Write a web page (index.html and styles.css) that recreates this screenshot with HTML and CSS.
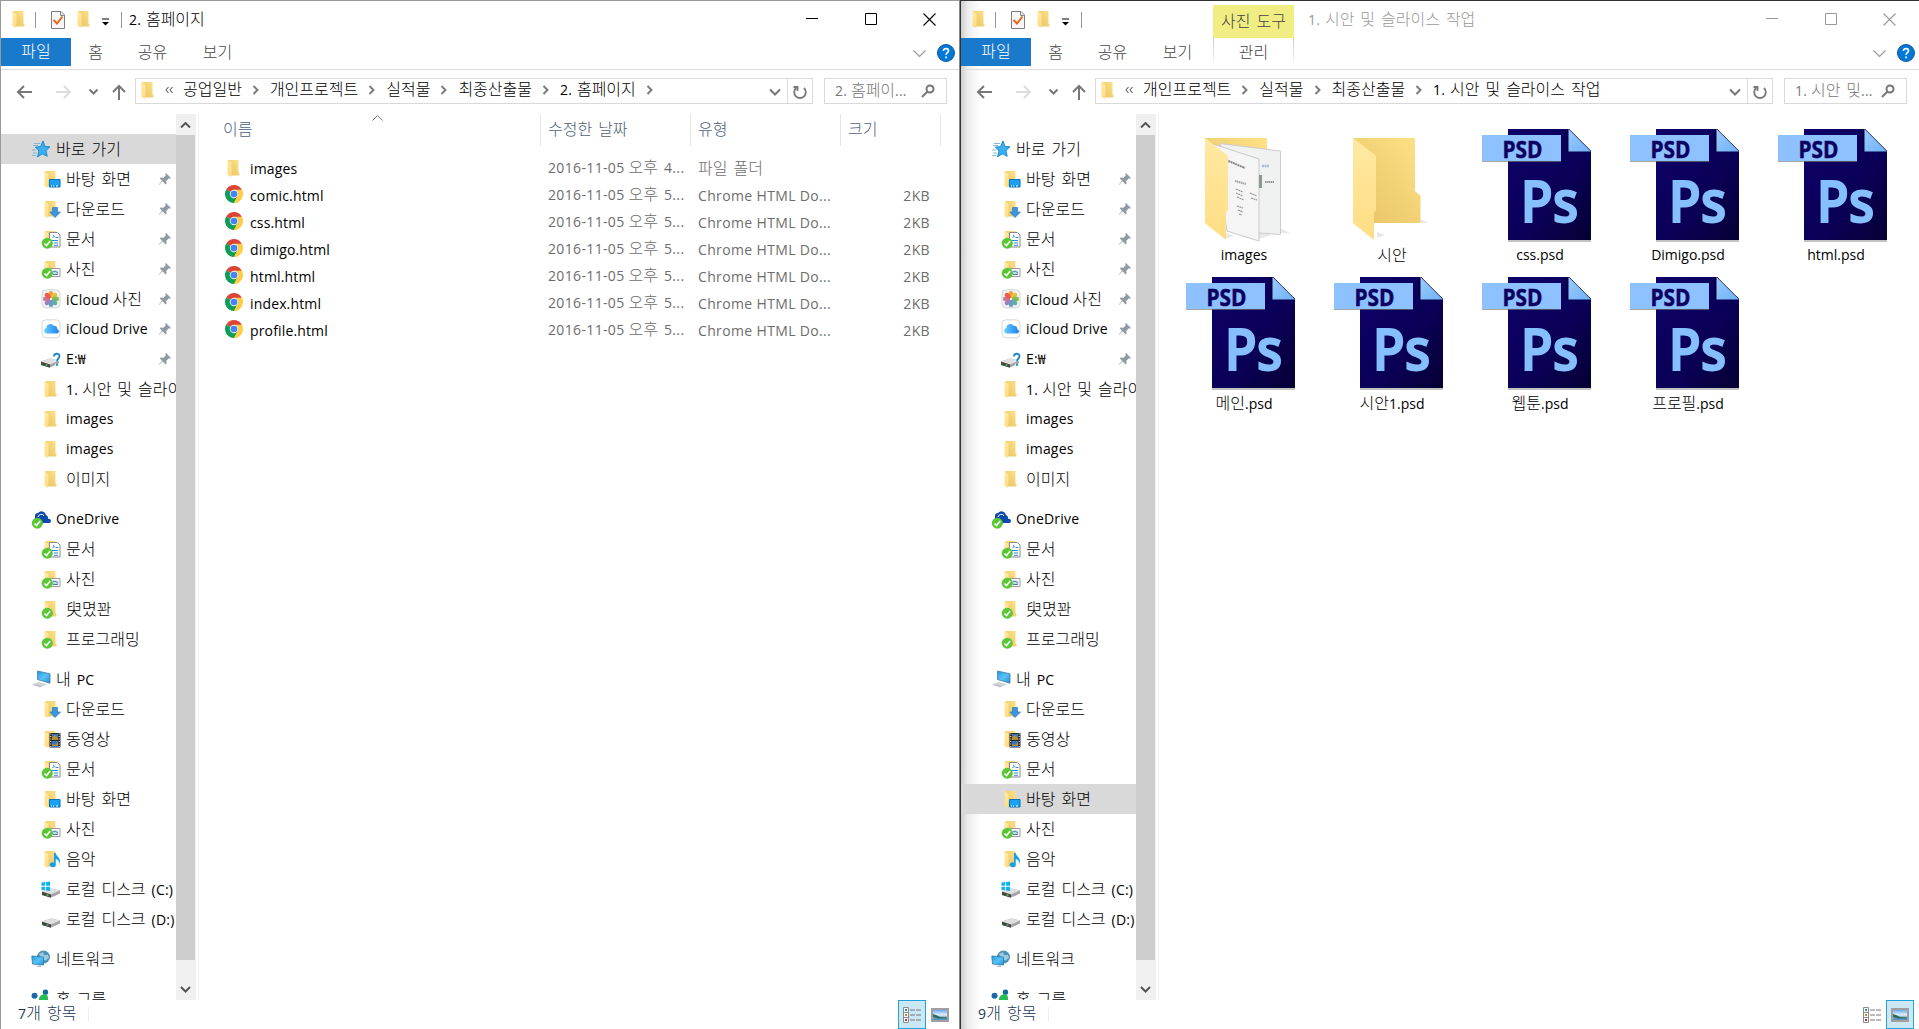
FILE: index.html
```html
<!DOCTYPE html>
<html lang="ko">
<head>
<meta charset="utf-8">
<title>파일 탐색기</title>
<link rel="stylesheet" href="styles.css">
</head>
<body>
<svg class="defs" width="0" height="0">
  <defs>
    <linearGradient id="gBack" x1="0" y1="1" x2="1" y2="0"><stop offset="0" stop-color="#e6c265"/><stop offset="1" stop-color="#ffe186"/></linearGradient>
    <linearGradient id="gFlap" x1="0" y1="0" x2="0" y2="1"><stop offset="0" stop-color="#ffe9a2"/><stop offset="1" stop-color="#ffdd83"/></linearGradient>
    <linearGradient id="gScreen" x1="0" y1="0" x2="1" y2="1"><stop offset="0" stop-color="#1d9be0"/><stop offset=".5" stop-color="#5ac1f5"/><stop offset="1" stop-color="#2196dd"/></linearGradient>
    <linearGradient id="gCloud" x1="0" y1="0" x2="1" y2="0"><stop offset="0" stop-color="#62d0fb"/><stop offset="1" stop-color="#2180ee"/></linearGradient>
    <linearGradient id="gPage" x1="0" y1="0" x2="1" y2="1"><stop offset="0" stop-color="#0d006a"/><stop offset=".6" stop-color="#0a0056"/><stop offset="1" stop-color="#060033"/></linearGradient>
    <linearGradient id="gPs" x1="0" y1="0" x2="1" y2="1"><stop offset="0" stop-color="#9bcbff"/><stop offset="1" stop-color="#6fb2f5"/></linearGradient>
    <linearGradient id="gSky" x1="0" y1="0" x2="0" y2="1"><stop offset="0" stop-color="#6fa8ee"/><stop offset=".5" stop-color="#e3f3fe"/><stop offset=".7" stop-color="#7fb0c8"/><stop offset="1" stop-color="#4b8fd0"/></linearGradient>
  </defs>
  <symbol id="folder" viewBox="0 0 20 20"><path d="M4 2h10.500v12.500l1 .5v2.500H6z" fill="url(#gBack)"/><path d="M3.500 2l4 3v10l-.6 3.700-3.400-1.700z" fill="url(#gFlap)"/></symbol>
  <symbol id="check" viewBox="0 0 20 20"><circle cx="6.300" cy="14.200" r="5.500" fill="#57c832"/><path d="M3.500 14.500l2 2 3.700-4.600" fill="none" stroke="#fff" stroke-width="1.600"/></symbol>
  <symbol id="star" viewBox="0 0 20 20"><path d="M12 2l2 5.500 5 .3-4 3.700 1.200 5.800-4.700-2.500-5 3 1.500-5.800-3.500-4 5-.3z" fill="#38b0f2" stroke="#1580c4" stroke-width=".9"/><path d="M3 4.500h6M2 6.500h5M1 11h4M2 14h4M1 16.500h4" stroke="#70b6df" stroke-width=".9"/></symbol>
  <symbol id="desktop" viewBox="0 0 20 20"><use href="#folder"/><path d="M8.500 10.500h10.500v7.500H8.500z" fill="#18a1f6" stroke="#0b72ad"/><path d="M10 17h1m1 0h1m2 0h2" stroke="#fff"/></symbol>
  <symbol id="download" viewBox="0 0 20 20"><use href="#folder"/><path d="M11.500 8.500h5V13h3L14 18.500 8.800 13h2.700z" fill="#3996e0" stroke="#2c77b8" stroke-width=".7"/></symbol>
  <symbol id="docs" viewBox="0 0 20 20"><use href="#folder"/><path d="M8.500 3.500h8l2.500 2.500v12h-10.500z" fill="#fff" stroke="#888"/><path d="M12 6l1.500 1-2 2M14.500 8.500h3M11 11.500h6M13 14h4M13 16.300h4" stroke="#2a8dd4" fill="none"/><use href="#check"/></symbol>
  <symbol id="pics" viewBox="0 0 20 20"><use href="#folder"/><path d="M8.500 9.500h10.500v8H8.500z" fill="#fff" stroke="#999"/><path d="M10 11.500h7.500v4.500H10z" fill="#bfdcf4"/><path d="M12 13l2-1 3 2M12 15.500h5" stroke="#4b7eaf" fill="none"/><use href="#check"/></symbol>
  <symbol id="synced" viewBox="0 0 20 20"><use href="#folder"/><use href="#check"/></symbol>
  <symbol id="iphoto" viewBox="0 0 20 20"><rect x="1" y=".8" width="18" height="18" rx="4" fill="#f4f4f4" stroke="#ccc" stroke-width=".8"/><g opacity=".88"><ellipse cx="10" cy="5.500" rx="2.400" ry="3.500" fill="#f7941d"/><ellipse cx="10" cy="5.500" rx="2.400" ry="3.500" fill="#dfbd28" transform="rotate(45 10 10)"/><ellipse cx="10" cy="5.500" rx="2.400" ry="3.500" fill="#79b637" transform="rotate(90 10 10)"/><ellipse cx="10" cy="5.500" rx="2.400" ry="3.500" fill="#4daa91" transform="rotate(135 10 10)"/><ellipse cx="10" cy="5.500" rx="2.400" ry="3.500" fill="#5593c9" transform="rotate(180 10 10)"/><ellipse cx="10" cy="5.500" rx="2.400" ry="3.500" fill="#8b73b6" transform="rotate(225 10 10)"/><ellipse cx="10" cy="5.500" rx="2.400" ry="3.500" fill="#c3668e" transform="rotate(270 10 10)"/><ellipse cx="10" cy="5.500" rx="2.400" ry="3.500" fill="#ee4934" transform="rotate(315 10 10)"/></g></symbol>
  <symbol id="icloud" viewBox="0 0 20 20"><rect x="1" y=".8" width="18" height="18" rx="4" fill="#fff" stroke="#ccc" stroke-width=".8"/><path d="M5.500 14.500a2.800 2.800 0 0 1-.2-5.500 4 4 0 0 1 7.300-2.200 3.500 3.500 0 0 1 3.700 3.400 2.200 2.200 0 0 1 0 4.300z" fill="url(#gCloud)"/></symbol>
  <symbol id="drive" viewBox="0 0 20 20"><path d="M1 12.500l9-3 9 2v3l-9 4-9-2.500z" fill="#a3a3a3"/><path d="M1 12.500l9-3 9 2-9 4z" fill="#dfdfdf"/><path d="M1 12.800l9 2.700v3.200l-9-2.700z" fill="#454545"/><path d="M5.500 16h2" stroke="#51dd45" stroke-width="1.300"/></symbol>
  <symbol id="unknown" viewBox="0 0 20 20"><use href="#drive" x="-1"/><path d="M13 7c0-4 6-4 6-.5 0 3-3 2.500-3 6M16 14.500v2" stroke="#fff" stroke-width="3.500" fill="none"/><path d="M13 7.500c0-3.500 5.500-3.500 5.500-.5 0 3-2.500 2.500-2.500 5.500M16 14.500v2.200" stroke="#2384ce" stroke-width="1.900" fill="none"/></symbol>
  <symbol id="windisk" viewBox="0 0 20 20"><use href="#drive"/><path d="M.5 3.500l3.500-.4v3.600H.5zM5 3l4-.6v4.300H5zM.5 7.700H4v3.500L.5 11zM5 7.700h4V12l-4-.6z" fill="#08b5f0"/></symbol>
  <symbol id="onedrive" viewBox="0 0 20 20"><path d="M4 12V6a3 3 0 0 1 3-2 4.500 4.500 0 0 1 8 2 3.500 3.500 0 0 1 2 4 2 2 0 0 1 1.500 4H8z" fill="#1049ac"/><path d="M7 8a3.500 3.500 0 0 1 6-1.500" stroke="#fff" fill="none"/><use href="#check"/></symbol>
  <symbol id="pc" viewBox="0 0 20 20"><path d="M6.500 2l12.500 2.800v9.400L6.500 10.500z" fill="url(#gScreen)" stroke="#326f98" stroke-width=".7"/><path d="M.5 15.500L8 13l8 2.500-7 3z" fill="#cdd3d8"/><path d="M3 15.500l7 2" stroke="#a9b2ba" stroke-width=".6"/></symbol>
  <symbol id="video" viewBox="0 0 20 20"><use href="#folder"/><path d="M8.500 4h11v14.500h-11z" fill="#292929"/><path d="M11 5h6v6h-6zM11 12h6v6h-6z" fill="#3477c8"/><path d="M11 8l3-2 3 3v2h-6zM11 15l3 1 3-3v4h-6z" fill="#b58e33"/><path d="M9.800 4.500v14M18.200 4.500v14" stroke="#fff" stroke-dasharray="1 1.500"/></symbol>
  <symbol id="music" viewBox="0 0 20 20"><use href="#folder"/><path d="M13 4h1.700c.2 3 4.200 4 4.300 8 0 2-1 3-1 3 .6-3-1.200-4.500-3.300-5v6a3 2.400 0 1 1-1.700-2.300z" fill="#11a0ec"/></symbol>
  <symbol id="network" viewBox="0 0 20 20"><circle cx="12.500" cy="8" r="6.500" fill="#4c91b7"/><path d="M8 5l4-2 1 3 4-.3 1 3-4 3-4-3z" fill="#9bcbe0"/><path d="M.8 7l11.700 1v8L1.500 15z" fill="url(#gScreen)" stroke="#267eae" stroke-width=".8"/><path d="M4 17.500l6-1.500v2z" fill="#a7b6c2"/></symbol>
  <symbol id="homegroup" viewBox="0 0 20 20"><circle cx="3.500" cy="6.800" r="3" fill="#1769aa"/><circle cx="14.500" cy="3.300" r="2.700" fill="#1466a4"/><path d="M8 20V9q2-4 6-4 3 1 3 4v11z" fill="#28bd51"/></symbol>
  <symbol id="chrome" viewBox="0 0 20 20"><path d="M10 10L1.340 5a10 10 0 0 1 17.320 0z" fill="#db4437"/><path d="M10 10L18.660 5A10 10 0 0 1 10 20z" fill="#ffcd40"/><path d="M10 10v10A10 10 0 0 1 1.340 5z" fill="#0f9d58"/><path d="M10 5.400h8.900L14 12.300z" fill="#ffcd40"/><path d="M6 12.300l4 2.300 4-2.300L10 20z" fill="#0f9d58"/><path d="M14 12.300L10 20l5-1 3-5V8z" fill="#ffcd40"/><circle cx="10" cy="10" r="4.700" fill="#eee"/><circle cx="10" cy="10" r="3.700" fill="#4285f4"/></symbol>
  <symbol id="pin" viewBox="0 0 14 14"><path d="M8 1l5 5-1 .8-1.200-.5-2.500 2.600.3 2.700-1 .8L4.500 9.200 1 13 .7 12.700 4 8.800 1.700 6.300l1-.9 2.700.3 2.400-2.500L7.200 2z" fill="#8f9aa3"/></symbol>
  <symbol id="qcheck" viewBox="0 0 16 20"><path d="M1.500 1.500h9.500l3.500 3.500v13.500h-13z" fill="#f7f7f7" stroke="#7e7e7e"/><path d="M10.500 1.500v4h4" fill="#ddd" stroke="#8a8a8a"/><path d="M3.500 10l3.500 3.500 5.500-7" fill="none" stroke="#f2601c" stroke-width="2"/></symbol>
  <symbol id="photo" viewBox="0 0 18 14"><path d="M1 1h16v12H1z" fill="#fff" stroke="#a0a0a0" stroke-width="2"/><path d="M2 2h14v10H2z" fill="url(#gSky)"/><path d="M2 6q4 1 7 3l7 .5v1H7L2 9z" fill="#2f6a5e"/></symbol>
  <symbol id="list" viewBox="0 0 18 16"><path d="M.5.500h5v15h-5zM.5 5.500h5M.5 10.500h5" fill="#fff" stroke="#8c8c8c"/><path d="M7 3h5m1 0h5M7 8h5m1 0h5M7 13h5m1 0h5" stroke="#777"/><path d="M2 2h2v2H2z" fill="#2997a8"/><path d="M2 7h2v2H2z" fill="#b48c31"/><path d="M2 12h2v2H2z" fill="#cb2d24"/></symbol>
  <symbol id="right" viewBox="0 0 8 10"><path d="M1.500 1l4 4-4 4" fill="none" stroke="#7c7c7c" stroke-width="2"/></symbol>
  <symbol id="psd" viewBox="0 0 110 114"><path d="M26 2h61l22 22v89H26z" fill="#999" opacity=".6"/><path d="M26 0h61l22 22v89H26z" fill="url(#gPage)"/><path d="M84 0h3l22 22v1H84z" fill="#070042"/><path d="M86.500 0L109 22.500H86.500z" fill="url(#gPs)"/><path d="M0 7h79v26H0z" fill="#777" opacity=".65"/><path d="M0 6h79v26H0z" fill="#8dc1ff"/><text class="psd-tag" x="20.500" y="28.500" textLength="40" lengthAdjust="spacingAndGlyphs">PSD</text><text class="psd-logo" x="38.500" y="92.500" textLength="58" lengthAdjust="spacingAndGlyphs">Ps</text></symbol>
  <symbol id="bigfolder" viewBox="0 0 88 106"><path d="M24 100l8-3-8-3zM67 85h9l-9-4z" fill="#ccc" opacity=".45"/><path d="M0 0h61q1 0 1 1v52l5.500 5v26q0 1-1 1H15z" fill="url(#gBack)"/><path d="M0 0l22 17q1 1 1 2v53l-2 3v27L1 86q-1-1-1-2z" fill="url(#gFlap)"/></symbol>
  <symbol id="picfolder" viewBox="0 0 88 106"><path d="M54 101l12-4-12-5zM75 95h10l-10-5zM20 101l9-3-8-3z" fill="#ccc" opacity=".45"/><path d="M0 0h61q1 0 1 1v84H0z" fill="url(#gBack)"/><path d="M15 5.500L75.500 13v83.500l-21-1.500z" fill="#f0f1f1" stroke="#ccc"/><path d="M8 6l46 15v82L22 93z" fill="#f5f5f5" stroke="#cacaca"/><g opacity=".75"><path d="M21 22l19 8" stroke="#666" stroke-width="2" stroke-dasharray="2 .5"/><path d="M30 43l11 3" stroke="#8a8a8a" stroke-width="2" stroke-dasharray="1.500 .5"/><path d="M31 51l7 3M31 55l7 3M32 59l7 3M45 55l7 3M46 60l6 2M32 68l6 2M33 72l5 2M34 76l3 1" stroke="#777" stroke-width="1.200" stroke-dasharray="2 .5"/><path d="M57 28h7" stroke="#91a9e0" stroke-width="2.500" stroke-dasharray="2 .5"/><path d="M60 44h9" stroke="#777" stroke-width="2" stroke-dasharray="1.500 .5"/></g><path d="M55.500 37v13" stroke="#8b998b" stroke-width="3"/><path d="M0 0l22 17q1 1 1 2v53l-2 3v27L1 86q-1-1-1-2z" fill="url(#gFlap)"/></symbol>
</svg>
<main class="screen" id="screen"></main>
<script src="app.js"></script>
</body>
</html>
```

FILE: styles.css
```css
* { box-sizing: border-box; }
body { margin: 0; background: #fff; overflow: hidden; }
body, .psd-tag, .psd-logo { font-family: "Open Sans", "Noto Sans CJK KR", sans-serif; }
.defs { position: absolute; }
svg { display: block; flex: none; }
.screen { display: grid; grid-template-columns: 960px 959px; height: 1029px; font-size: 14px; color: #000; white-space: nowrap; line-height: 20px; letter-spacing: .2px; }
.ko { font-family: "Noto Sans CJK KR", sans-serif; font-size: 16px; font-weight: 300; line-height: 18px; letter-spacing: 0; word-spacing: 1.500px; }

.window { display: flex; flex-direction: column; overflow: hidden; height: 1029px; border-top: 1px solid #999; border-left: 1px solid #999; border-right: 1px solid #888; background: #fff; }
.window.inactive { border-color: #333; border-right: 0; background: linear-gradient(90deg, #cfcfcf, #eee 7px, #fff 20px); }

.titlebar { display: flex; height: 37px; align-items: flex-start; }
.quick { display: flex; width: 128px; height: 37px; align-items: flex-start; padding: 8px 0 0 8px; }
.quick .bar { width: 1px; height: 16px; margin-top: 3px; background: #999; }
.quick .q1 { margin-right: 6px; }
.quick .qc { margin: 1px 8px 0 14px; }
.quick .tri { margin: 9px 12px 0 8px; }
.title { flex: 1; padding-top: 8px; word-spacing: 1px; }
.inactive .title { color: #999; }
.tool-tag { width: 81px; height: 33px; margin: 4px 14px 0 124px; padding-top: 6px; text-align: center; background: #f0ee83; color: #444; }
.caption { display: flex; gap: 46px; padding: 12px 23px 0 0; color: #000; }
.inactive .caption { color: #999; }

.tabs { display: flex; height: 32px; border-bottom: 1px solid #dadbdc; color: #444; }
.tab { padding: 4px 0 0; text-align: center; height: 28px; width: 65px; }
.tab.file { background: #1979ca; color: #fff; width: 70px; padding-top: 3px; }
.tab.home { width: 49px; }
.tab.manage { width: 81px; height: 24px; margin-left: 3px; border: 1px solid; border-width: 0 1px; border-image: linear-gradient(#ccc, #eee) 1; }
.ribbon-tools { display: flex; margin-left: auto; padding: 6px 4px 0 0; gap: 11px; }
.ribbon-tools .fold { margin-top: 6px; }

.addressbar { display: flex; height: 44px; padding: 8px 0 0 15px; }
.nav { display: flex; width: 119px; padding-top: 6px; }
.path { display: flex; width: 678px; height: 26px; border: 1px solid #d9d9d9; background: #fff; }
.crumbs { display: flex; flex: 1; padding: 1px 0 0 2px; }
.crumbs .label { margin-top: -1px; word-spacing: 1px; }
.crumbs .sep { margin: 5px 10px 0; }
.crumbs .more { width: 8px; height: 10px; margin: 5px 10px 0 7px; }
.path .down { margin: 9px 6px 0 0; }
.refresh { width: 25px; border-left: 1px solid #d9d9d9; padding: 5px 0 0 4px; }
.search { display: flex; justify-content: space-between; width: 123px; height: 26px; margin-left: 11px; padding: 1px 11px 0 10px; border: 1px solid #d9d9d9; color: #777; background: #fff; }
.search svg { margin-top: 4px; }

.body { display: flex; height: 886px; flex: none; }
.sidebar { width: 175px; height: 886px; padding-top: 20px; overflow: hidden; }
.group { margin-bottom: 10px; }
.node { display: flex; height: 30px; align-items: center; padding-left: 40px; position: relative; }
.node.root { padding-left: 30px; }
.node.selected { background: #d9d9d9; }
.node svg { margin-right: 5px; }
.node .pin { position: absolute; right: 4px; margin: 0; top: 8px; }
.scroll { display: flex; flex-direction: column; align-items: flex-start; width: 20px; height: 886px; background: #f0f0f0; }
.scroll .thumb { width: 19px; height: 825px; background: #cdcdcd; }
.scroll .up { margin: 8px 0 7px 4px; }
.scroll .dn { margin: 26px 0 0 4px; }
.content { flex: 1; margin-left: 2px; border-left: 1px solid #f2f2f2; height: 886px; }

.details { display: grid; grid-template-columns: 342px 150px 150px 100px; }
.head { height: 32px; padding: 5px 0 0 7px; border-right: 1px solid #e5e5e5; color: #4c607a; position: relative; }
.head.name { padding-left: 24px; }
.sort { position: absolute; left: 173px; top: 1px; }
.rows { padding-top: 9px; }
.row { display: grid; grid-template-columns: 349px 150px 150px 82px; height: 27px; align-items: center; color: #6d6d6d; letter-spacing: .35px; }
.row .file { display: flex; align-items: center; padding-left: 25px; color: #000; letter-spacing: .15px; }
.row svg { width: 18px; height: 18px; margin: -3px 7px 0 1px; }
.row .folder-icon { width: 20px; height: 20px; margin: -1px 6px 0 0; }
.row .when { margin-top: -2px; }
.row .size { text-align: right; }

.tiles { display: grid; grid-template-columns: repeat(5, 148px); grid-auto-rows: 148px; padding: 15px 0 0 11px; letter-spacing: 0; }
.tile { display: flex; flex-direction: column; align-items: center; }
.tile .psd { margin-left: -7px; }
.tile .fold { margin: 9px 0 -1px 10px; }
.tile .label { margin-top: 2px; color: #000; }

.status { display: flex; height: 29px; padding-left: 17px; color: #1e395b; }
.status .count { width: 71px; height: 22px; padding-top: 3px; border-right: 1px solid; border-image: linear-gradient(transparent 35%, #eee 35%) 1; }
.views { display: flex; margin-left: auto; padding-right: 5px; }
.view { width: 28px; height: 29px; display: flex; align-items: center; justify-content: center; border: 1px solid transparent; }
.view.on { border-color: #26a0da; background: #cbe8f6; }
.psd-tag { font: 700 24px "Open Sans", sans-serif; fill: #0d0060; stroke: #0d0060; stroke-width: .5px; letter-spacing: 0; }
.psd-logo { font: 600 58px "Open Sans", sans-serif; fill: #85bffd; stroke: #85bffd; stroke-width: 1.800px; letter-spacing: 0; }
```

FILE: app.js
```js
const icon = (id, w = 20, h = w, cls = '') => `<svg class="${cls}" width="${w}" height="${h}"><use href="#${id}"/></svg>`;
const line = (w, h, d, color, width = 1, cls = '') => `<svg class="${cls}" width="${w}" height="${h}" fill="none" stroke="${color}" stroke-width="${width}"><path d="${d}"/></svg>`;

// Hangul runs use their own font size
const t = s => s.replace(/[\u3400-\u9fff\uac00-\ud7a3]+(?: [\u3400-\u9fff\uac00-\ud7a3]+)* ?/g, m => `<span class="ko">${m}</span>`);

const groups = [
  [['star', '바로 가기'], ['desktop', '바탕 화면', 1], ['download', '다운로드', 1], ['docs', '문서', 1], ['pics', '사진', 1], ['iphoto', 'iCloud 사진', 1], ['icloud', 'iCloud Drive', 1], ['unknown', 'E:₩', 1], ['folder', '1. 시안 및 슬라이스 작업'], ['folder', 'images'], ['folder', 'images'], ['folder', '이미지']],
  [['onedrive', 'OneDrive'], ['docs', '문서'], ['pics', '사진'], ['synced', '臾몄꽌'], ['synced', '프로그래밍']],
  [['pc', '내 PC'], ['download', '다운로드'], ['video', '동영상'], ['docs', '문서'], ['desktop', '바탕 화면'], ['pics', '사진'], ['music', '음악'], ['windisk', '로컬 디스크 (C:)'], ['drive', '로컬 디스크 (D:)']],
  [['network', '네트워크']],
  [['homegroup', '홈 그룹']]
];

const sidebar = sel => groups.map((g, gi) => `<div class="group">${g.map(([ic, name, pin], i) =>
  `<div class="node${i ? '' : ' root'}${sel === gi + '-' + i ? ' selected' : ''}">${icon(ic)}<span>${t(name)}</span>${pin ? icon('pin', 14, 14, 'pin') : ''}</div>`).join('')}</div>`).join('');

const files = ['images', 'comic.html', 'css.html', 'dimigo.html', 'html.html', 'index.html', 'profile.html'];
const details = `<div class="details">
  <div class="head name">${t('이름')}${line(11, 6, 'M.5 5.500l5-5 5 5', '#777', 1, 'sort')}</div><div class="head">${t('수정한 날짜')}</div><div class="head">${t('유형')}</div><div class="head">${t('크기')}</div></div>
  <div class="rows">${files.map((f, i) => `<div class="row"><div class="file">${i ? icon('chrome') : icon('folder', 20, 20, 'folder-icon')}<span>${f}</span></div><div class="when">${t(`2016-11-05 오후 ${i ? 5 : 4}...`)}</div><div>${i ? 'Chrome HTML Do...' : t('파일 폴더')}</div><div class="size">${i ? '2KB' : ''}</div></div>`).join('')}</div>`;

const tileNames = ['images', '시안', 'css.psd', 'Dimigo.psd', 'html.psd', '메인.psd', '시안1.psd', '웹툰.psd', '프로필.psd'];
const tiles = `<div class="tiles">${tileNames.map((n, i) => `<div class="tile">${i < 2 ? icon(i ? 'bigfolder' : 'picfolder', 88, 106, 'fold') : icon('psd', 110, 114, 'psd')}<span class="label">${t(n)}</span></div>`).join('')}</div>`;

const makeWindow = w => `<section class="window ${w.cls}">
  <header class="titlebar">
    <div class="quick">${icon('folder', 20, 20, 'q1')}<i class="bar"></i>${icon('qcheck', 16, 20, 'qc')}${icon('folder')}
      <svg class="tri" width="7" height="8"><path d="M0 1h7" stroke="#000"/><path d="M0 4h7L3.500 7.500z"/></svg><i class="bar"></i></div>
    ${w.tool ? `<div class="tool-tag">${t('사진 도구')}</div>` : ''}
    <div class="title">${t(w.title)}</div>
    <div class="caption">${line(13, 13, 'M0 5.500h12', 'currentColor')}${line(12, 12, 'M.5 .5h11v11H.5z', 'currentColor')}${line(13, 13, 'M.5 .5l12 12M12.500 .5l-12 12', 'currentColor', 1.1)}</div>
  </header>
  <nav class="tabs"><div class="tab file">${t('파일')}</div><div class="tab home">${t('홈')}</div><div class="tab share">${t('공유')}</div><div class="tab">${t('보기')}</div>
    ${w.tool ? `<div class="tab manage">${t('관리')}</div>` : ''}
    <div class="ribbon-tools">${line(13, 8, 'M.5 .5l6 6 6-6', '#999', 1.2, 'fold')}
      <svg width="18" height="18"><circle cx="9" cy="9" r="8.500" fill="#0078d7" stroke="#17599a"/><path d="M6.500 7c0-3.400 5-3 5-.3 0 2-2.400 1.800-2.400 4M9.100 12.500v1.800" stroke="#fff" stroke-width="1.700" fill="none"/></svg></div></nav>
  <div class="addressbar">
    <div class="nav"><svg width="112" height="16" fill="none" stroke="#777" stroke-width="2"><path d="M16 8H2M8 2L2 8l6 6"/><path d="M40 8h14M48 2l6 6-6 6" stroke="#ddd"/><path d="M73.500 5.500l4 4 4-4"/><path d="M103 16V2M97 8l6-6 6 6"/></svg></div>
    <div class="path"><div class="crumbs">${icon('folder', 20, 20)}
      ${line(8, 10, 'M3.500 2L1 5l2.500 3M7.500 2L5 5l2.500 3', '#666', 1.1, 'more')}
      ${w.path.map(p => `<span class="label">${t(p)}</span>`).join(icon('right', 8, 10, 'sep'))}${w.tail ? icon('right', 8, 10, 'sep') : ''}</div>
      ${line(12, 9, 'M1 1.500l5 5 5-5', '#777', 2, 'down')}
      <div class="refresh">${line(16, 17, 'M4 4a5.800 5.800 0 1 0 8 0M1.500 3h4v4', '#777', 1.8)}</div></div>
    <div class="search"><span>${t(w.search)}</span>${line(14, 14, 'M1 13l5-5M5.500 5a3.500 3.500 0 1 1 7 0 3.500 3.500 0 1 1-7 0', '#777', 2)}</div>
  </div>
  <div class="body"><aside class="sidebar">${sidebar(w.selected)}</aside>
    <div class="scroll">${line(11, 6, 'M1 5.500l4.500-4.500 4.500 4.500', '#555', 2, 'up')}<div class="thumb"></div>${line(11, 8, 'M1 1l4.500 4.500 4.500-4.500', '#555', 2, 'dn')}</div>
    <div class="content">${w.content}</div></div>
  <footer class="status"><div class="count">${t(w.count)}</div><div class="views"><div class="view ${w.tool ? '' : 'on'}">${icon('list', 18, 16)}</div><div class="view ${w.tool ? 'on' : ''}">${icon('photo', 18, 14)}</div></div></footer>
</section>`;

document.getElementById('screen').innerHTML = makeWindow({
  cls: '', title: '2. 홈페이지', path: ['공업일반', '개인프로젝트', '실적물', '최종산출물', '2. 홈페이지'], tail: true,
  search: '2. 홈페이...', selected: '0-0', content: details, count: '7개 항목'
}) + makeWindow({
  cls: 'inactive', tool: true, title: '1. 시안 및 슬라이스 작업', path: ['개인프로젝트', '실적물', '최종산출물', '1. 시안 및 슬라이스 작업'],
  search: '1. 시안 및...', selected: '2-4', content: tiles, count: '9개 항목'
});
```
